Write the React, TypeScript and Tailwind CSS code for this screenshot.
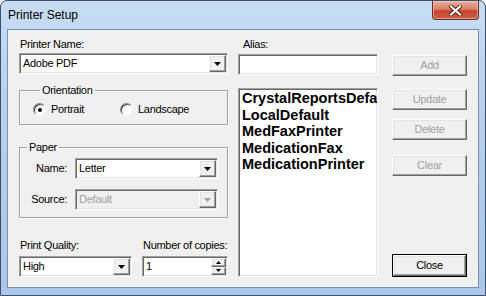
import React from "react";

const ui = "font-['Liberation_Sans',Arial,sans-serif] text-[11px] tracking-[-0.3px] leading-[13px]";
const sunken =
  "border border-t-[#a0a0a0] border-l-[#a0a0a0] border-r-white border-b-white shadow-[inset_1px_1px_0_#696969,inset_-1px_-1px_0_#e3e3e3]";
const raised =
  "border border-t-white border-l-white border-r-[#696969] border-b-[#696969] shadow-[inset_-1px_-1px_0_#a0a0a0,inset_1px_1px_0_#e3e3e3]";

function Arrow({ disabled, up, small }: { disabled?: boolean; up?: boolean; small?: boolean }) {
  const c = disabled ? "#a0a0a0" : "#000";
  if (small) {
    return (
      <svg width="5" height="3" viewBox="0 0 5 3">
        <path d={up ? "M2.5 0 L5 3 L0 3 Z" : "M0 0 L5 0 L2.5 3 Z"} fill={c} />
      </svg>
    );
  }
  return (
    <svg width="7" height="4" viewBox="0 0 7 4">
      <path d="M0 0 L7 0 L3.5 4 Z" fill={c} />
    </svg>
  );
}

function Combo({ value, className, disabled }: { value: string; className: string; disabled?: boolean }) {
  return (
    <div className={`flex h-[21px] p-[1px] ${className} ${disabled ? "bg-[#f0f0f0]" : "bg-white"} ${sunken}`}>
      <span className={`flex-1 pl-[2px] leading-[17px] ${disabled ? "text-[#a0a0a0]" : "text-black"}`}>{value}</span>
      <span className={`flex h-[17px] w-[17px] items-center justify-center bg-[#f0f0f0] ${raised}`}>
        <Arrow disabled={disabled} />
      </span>
    </div>
  );
}

function Radio({ label, checked }: { label: string; checked?: boolean }) {
  return (
    <div className="flex items-center gap-[5px]">
      <span className="flex h-[13px] w-[13px] items-center justify-center rounded-full border border-t-[#808080] border-l-[#808080] border-r-[#f4f4f4] border-b-[#f4f4f4] bg-white shadow-[inset_1px_1px_0_#404040]">
        {checked && <span className="h-[4px] w-[4px] rounded-full bg-black" />}
      </span>
      <span>{label}</span>
    </div>
  );
}

function Btn({ label, top, disabled, def }: { label: string; top: string; disabled?: boolean; def?: boolean }) {
  if (def) {
    return (
      <div className={`${top} h-[23px] w-[75px] border border-black`}>
        <div className={`flex h-full items-center justify-center bg-[#f0f0f0] text-black ${raised}`}>{label}</div>
      </div>
    );
  }
  return (
    <div
      className={`${top} flex h-[21px] w-[75px] items-center justify-center bg-[#f0f0f0] ${raised} ${
        disabled ? "text-[#a0a0a0]" : "text-black"
      }`}
    >
      {label}
    </div>
  );
}

export default function App() {
  // first entry is cut by the list's edge in the dialog
  const printers = ["CrystalReportsDefa", "LocalDefault", "MedFaxPrinter", "MedicationFax", "MedicationPrinter"];

  return (
    <div className="flex h-[296px] w-[486px] flex-col overflow-hidden rounded-t-[7px] border border-[#3d5068] bg-[linear-gradient(180deg,#c6ddf3_0%,#b7d1ee_35%,#aac7ea_100%)]">
      {/* title bar */}
      <div className="flex h-[28px] items-start">
        <span className="ml-[7px] mt-[7px] font-['Liberation_Sans',Arial,sans-serif] text-[12px] leading-[15px] text-black">
          Printer Setup
        </span>
        <div className="ml-auto mr-[6px] flex h-[19px] w-[47px] items-center justify-center rounded-b-[4px] border border-t-0 border-[#6b2a1e] bg-[linear-gradient(180deg,#eab0a1_0%,#d9806b_45%,#c5442b_55%,#d0614a_100%)] shadow-[inset_0_0_0_1px_rgba(255,220,210,0.5)]">
          <svg width="13" height="11" viewBox="0 0 13 11">
            <path d="M2 1.5 L11 9.5 M11 1.5 L2 9.5" stroke="#4a1a12" strokeWidth="4" strokeLinecap="square" />
            <path d="M2 1.5 L11 9.5 M11 1.5 L2 9.5" stroke="#ffffff" strokeWidth="2.2" strokeLinecap="square" />
          </svg>
        </div>
      </div>

      {/* client area */}
      <div className={`mx-[6px] mb-[7px] flex flex-1 border border-[#7d90a9] bg-[#f0f0f0] pl-[11px] pt-[8px] ${ui}`}>
        {/* left column */}
        <div className="flex w-[209px] flex-col">
          <span className="ml-[1px]">Printer Name:</span>
          <Combo value="Adobe PDF" className="mt-[2px] w-[209px]" />

          <fieldset className="mt-[10px] border border-[#a0a0a0] px-[13px] pb-[8px] pt-[6px] shadow-[1px_1px_0_white,inset_1px_1px_0_white]">
            <legend className="ml-[7px] px-[2px]">Orientation</legend>
            <div className="flex">
              <div className="w-[87px]">
                <Radio label="Portrait" checked />
              </div>
              <Radio label="Landscape" />
            </div>
          </fieldset>

          <fieldset className="mt-[16px] border border-[#a0a0a0] pb-[7px] pr-[9px] pt-[4px] shadow-[1px_1px_0_white,inset_1px_1px_0_white]">
            <legend className="ml-[7px] px-[2px]">Paper</legend>
            <div className="flex flex-col gap-[10px]">
              <div className="flex items-center">
                <span className="w-[47px] text-right">Name:</span>
                <Combo value="Letter" className="ml-[8px] w-[143px]" />
              </div>
              <div className="flex items-center">
                <span className="w-[47px] text-right">Source:</span>
                <Combo value="Default" className="ml-[8px] w-[143px]" disabled />
              </div>
            </div>
          </fieldset>

          <div className="mt-[21px] flex gap-[10px]">
            <div className="flex w-[113px] flex-col">
              <span className="ml-[1px]">Print Quality:</span>
              <Combo value="High" className="mt-[4px] w-[113px]" />
            </div>
            <div className="flex w-[86px] flex-col">
              <span className="ml-[1px]">Number of copies:</span>
              <div className={`mt-[4px] flex h-[21px] bg-white p-[1px] ${sunken}`}>
                <span className="flex-1 pl-[2px] leading-[17px]">1</span>
                <div className="flex w-[15px] flex-col">
                  <span className={`flex h-[8.5px] items-center justify-center bg-[#f0f0f0] ${raised}`}>
                    <Arrow up small />
                  </span>
                  <span className={`flex h-[8.5px] items-center justify-center bg-[#f0f0f0] ${raised}`}>
                    <Arrow small />
                  </span>
                </div>
              </div>
            </div>
          </div>
        </div>

        {/* alias + list */}
        <div className="ml-[10px] flex w-[140px] flex-col">
          <span className="ml-[5px]">Alias:</span>
          <div className={`mt-[3px] h-[21px] bg-white ${sunken}`} />
          <div
            className={`mt-[13px] h-[189px] overflow-hidden bg-white pl-[3px] pt-[1px] font-['Liberation_Sans',Arial,sans-serif] text-[14.5px] font-bold leading-[16.5px] tracking-normal ${sunken}`}
          >
            {printers.map((p) => (
              <div key={p} className="whitespace-nowrap">
                {p}
              </div>
            ))}
          </div>
        </div>

        {/* buttons */}
        <div className="ml-[14px] flex w-[75px] flex-col">
          <Btn label="Add" top="mt-[17px]" disabled />
          <Btn label="Update" top="mt-[13px]" disabled />
          <Btn label="Delete" top="mt-[9px]" disabled />
          <Btn label="Clear" top="mt-[15px]" disabled />
          <Btn label="Close" top="mt-[78px]" def />
        </div>
      </div>
    </div>
  );
}
